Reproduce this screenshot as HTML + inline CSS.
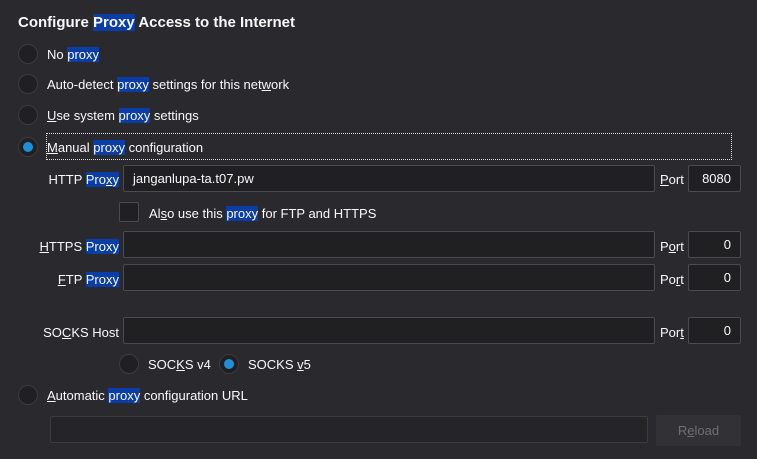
<!DOCTYPE html>
<html><head><meta charset="utf-8"><style>
*{box-sizing:border-box;margin:0;padding:0}
body{width:757px;height:459px;background:#2a2a2e;color:#f9f9fa;font-family:"Liberation Sans",sans-serif;font-size:13px;position:relative;overflow:hidden}
.a{position:absolute;white-space:nowrap;line-height:16px}
.l{position:absolute;white-space:nowrap;line-height:16px;right:638px;text-align:right}
.h{background:#0a3da6}
u{text-decoration:underline}
.r{position:absolute;width:20px;height:20px;border-radius:50%;background:#202023;border:1px solid #3c3c40}
.r.on::after{content:"";position:absolute;left:4px;top:4px;width:10px;height:10px;border-radius:50%;background:#1e90d8}
.i{position:absolute;background:#202023;border:1px solid #4a4a4f;border-radius:2px;height:27px;line-height:25px;padding:0 9px}
.p{text-align:right}
</style></head><body>
<div class="a" style="left:18px;top:14px;font-size:15px;font-weight:bold;line-height:18px">Configure <span class="h">Proxy</span> Access to the Internet</div>

<div class="r" style="left:18px;top:44px"></div><div class="a" style="left:47px;top:47px">No <span class="h">proxy</span></div>
<div class="r" style="left:18px;top:74px"></div><div class="a" style="left:47px;top:77px">Auto-detect <span class="h">proxy</span> settings for this net<u>w</u>ork</div>
<div class="r" style="left:18px;top:105px"></div><div class="a" style="left:47px;top:108px"><u>U</u>se system <span class="h">proxy</span> settings</div>
<div class="r on" style="left:18px;top:137px"></div>
<div style="position:absolute;left:46px;top:133px;width:686px;height:27px;border:1px dotted #ddd"></div>
<div class="a" style="left:47px;top:140px"><u>M</u>anual <span class="h">proxy</span> configuration</div>

<div class="l" style="top:172px">HTTP <span class="h">Pro<u>x</u>y</span></div>
<div class="i" style="left:123px;top:165px;width:532px">janganlupa-ta.t07.pw</div>
<div class="a" style="left:660px;top:172px"><u>P</u>ort</div>
<div class="i p" style="left:688px;top:165px;width:53px">8080</div>

<div style="position:absolute;left:119px;top:202px;width:20px;height:20px;background:#202023;border:1px solid #4a4a4f;border-radius:2px"></div>
<div class="a" style="left:149px;top:206px">Al<u>s</u>o use this <span class="h">proxy</span> for FTP and HTTPS</div>

<div class="l" style="top:239px"><u>H</u>TTPS <span class="h">Proxy</span></div>
<div class="i" style="left:123px;top:231px;width:532px"></div>
<div class="a" style="left:660px;top:239px">P<u>o</u>rt</div>
<div class="i p" style="left:688px;top:231px;width:53px">0</div>

<div class="l" style="top:272px"><u>F</u>TP <span class="h">Proxy</span></div>
<div class="i" style="left:123px;top:264px;width:532px"></div>
<div class="a" style="left:660px;top:272px">Po<u>r</u>t</div>
<div class="i p" style="left:688px;top:264px;width:53px">0</div>

<div class="l" style="top:325px">SO<u>C</u>KS Host</div>
<div class="i" style="left:123px;top:317px;width:532px"></div>
<div class="a" style="left:660px;top:325px">Por<u>t</u></div>
<div class="i p" style="left:688px;top:317px;width:53px">0</div>

<div class="r" style="left:119px;top:354px"></div><div class="a" style="left:148px;top:357px">SOC<u>K</u>S v4</div>
<div class="r on" style="left:219px;top:354px"></div><div class="a" style="left:248px;top:357px">SOCKS <u>v</u>5</div>

<div class="r" style="left:18px;top:385px"></div><div class="a" style="left:47px;top:388px"><u>A</u>utomatic <span class="h">proxy</span> configuration URL</div>
<div class="i" style="left:50px;top:416px;width:598px;border-color:#3c3c40;background:#252528"></div>
<div style="position:absolute;left:656px;top:415px;width:85px;height:31px;background:#323236;border-radius:2px;color:#6f6f73;text-align:center;line-height:32px">R<u>e</u>load</div>
</body></html>
